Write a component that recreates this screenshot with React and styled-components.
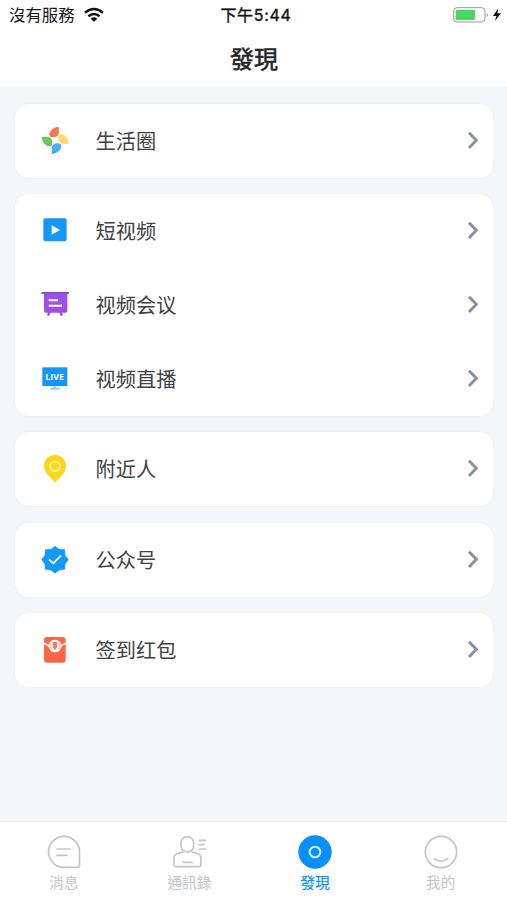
import React from 'react';
import styled, { createGlobalStyle } from 'styled-components';

const GlobalStyle = createGlobalStyle`
  * {
    box-sizing: border-box;
  }

  body {
    margin: 0;
    background-color: #f4f6fa;
    font-family: 'Liberation Sans', 'Noto Sans CJK SC', sans-serif;
  }
`;

const Screen = styled.div`
  display: flex;
  flex-direction: column;
  width: 507px;
  height: 900px;
  overflow: hidden;
  background-color: #f4f6fa;
`;

const Header = styled.header`
  flex: none;
  height: 86px;
  background-color: #fff;
`;

const StatusBar = styled.div`
  display: grid;
  grid-template-columns: 1fr auto 1fr;
  align-items: center;
  height: 29px;
  padding: 0 6px 0 9px;
  color: #161616;
  font-family: Inter, 'Noto Sans CJK TC', sans-serif;
  font-size: 16.4px;
  line-height: 29px;
`;

const Carrier = styled.div`
  display: flex;
  align-items: center;
  gap: 9px;
  padding-top: 1px;
`;

const Clock = styled.div`
  padding-left: 2px;
  font-size: 16px;
  font-weight: 400;
  letter-spacing: 0.7px;
  -webkit-text-stroke: 0.4px currentColor;
`;

const Power = styled.div`
  display: flex;
  align-items: center;
  justify-content: flex-end;
  gap: 3px;
`;

const Title = styled.h1`
  margin: 0;
  padding-left: 1px;
  color: #262626;
  font-family: 'Noto Sans CJK TC', sans-serif;
  font-size: 24px;
  font-weight: 400;
  line-height: 57px;
  text-align: center;
  -webkit-text-stroke: 0.6px currentColor;
`;

const Main = styled.main`
  flex: 1;
  display: flex;
  flex-direction: column;
  gap: 16.6px;
  padding: 18px 14px 0 15px;
`;

const Card = styled.section`
  border-radius: 14px;
  background-color: #fff;
  box-shadow: 0 0 2px #e3e7ee;
`;

const Row = styled.div`
  display: flex;
  align-items: center;
  height: 73.8px;
  padding: 0 14px 0 25px;
`;

const Label = styled.span`
  flex: 1;
  margin-left: 25.6px;
  color: #404245;
  font-family: 'Noto Sans CJK SC', sans-serif;
  font-size: 20.2px;
  line-height: 30px;
`;

const Icon = styled.svg`
  display: block;
  flex: none;
  overflow: visible;
`;

const LiveText = styled.text`
  fill: #fff;
  font-family: 'Open Sans', sans-serif;
  font-size: 26px;
  font-weight: 700;
`;

const TabBar = styled.nav`
  flex: none;
  display: grid;
  grid-template-columns: repeat(4, 125.6px);
  height: 79px;
  padding: 12.5px 0 0 1px;
  border-top: 1px solid #eef0f4;
  background-color: #fff;
`;

const Tab = styled.div`
  display: flex;
  flex-direction: column;
  align-items: center;
  color: ${props => (props.$active ? '#0b8ffa' : '#c2c4ce')};
`;

const TabLabel = styled.span`
  margin-top: 2.5px;
  font-family: 'Noto Sans CJK TC', sans-serif;
  font-size: 14.8px;
  line-height: 22px;
  ${props => props.$active && '-webkit-text-stroke: 0.2px currentColor;'}
`;

const WifiIcon = () => (
  <Icon width="20" height="14" viewBox="0 0 60 42">
    <g fill="none" stroke="#111" strokeWidth="7.5">
      <path d="M3 11 Q30 -11 57 11" />
      <path d="M13 22 Q30 8 47 22" />
    </g>
    <path fill="#111" d="M20 29 Q30 21 40 29 L30 38 Z" />
  </Icon>
);

const BatteryIcon = () => (
  <Icon width="36" height="16" viewBox="0 0 108 48">
    <rect x="-1" y="2" width="94" height="43" rx="10" fill="none" stroke="#999" strokeWidth="3" />
    <rect x="5" y="8" width="58" height="31" rx="4" fill="#4cd763" />
    <path d="M98 17 Q105 24 98 31 Z" fill="#999" />
  </Icon>
);

const BoltIcon = () => (
  <Icon width="8" height="13" viewBox="0 0 24 39">
    <path fill="#111" d="M16 -2 L0 21 H10 L6 36 L24 13 H13 Z" />
  </Icon>
);

const ItemIcon = ({ children }) => (
  <Icon width="30" height="30" viewBox="0 0 90 90">
    {children}
  </Icon>
);

const petals = ['#f47750', '#fddb68', '#4daef2', '#68c958'];

const MomentsIcon = () => (
  <ItemIcon>
    {petals.map((color, index) => (
      <path
        key={color}
        fill={color}
        transform={`rotate(${index * 90} 46 43)`}
        d="M57 2 C42 3 28 13 28 26 C28 31 33 34 39 34 C49 34 57 28 57 18 C57 12 55 8 57 2 Z"
      />
    ))}
  </ItemIcon>
);

const ShortVideoIcon = () => (
  <ItemIcon>
    <rect x="10" y="7" width="70" height="69" rx="6" fill="#1597fb" />
    <path d="M35 28 L60 42 L35 56 Z" fill="#fff" />
  </ItemIcon>
);

const MeetingIcon = () => (
  <ItemIcon>
    <path d="M29 64 L24 77 M60 64 L66 77" stroke="#9b51e0" strokeWidth="7" />
    <path d="M5 6 H87 V12 H82 V62 Q82 68 76 68 H18 Q12 68 12 62 V12 H5 Z" fill="#9d50e3" />
    <path d="M5 6.5 H87 V10 H5 Z" fill="#8541cc" />
    <path d="M26 31 H54 M26 47 H66" stroke="#fff" strokeWidth="6" />
  </ItemIcon>
);

const LiveIcon = () => (
  <ItemIcon>
    <path d="M7 10 H82 V66 H7 Z" fill="#1697f8" />
    <path d="M44 66 V73 M31 74 H59" stroke="#7bc5fa" strokeWidth="5" />
    <LiveText x="16" y="47" textLength="56" lengthAdjust="spacingAndGlyphs">
      LIVE
    </LiveText>
  </ItemIcon>
);

const NearbyIcon = () => (
  <ItemIcon>
    <path
      d="M45 86 C39 77 12 59 12 36 C12 16 26 3 45 3 C64 3 78 16 78 36 C78 59 51 77 45 86 Z"
      fill="#fdd51c"
    />
    <circle cx="45" cy="37" r="14.5" fill="none" stroke="#fff7c4" strokeWidth="4.5" />
  </ItemIcon>
);

const OfficialIcon = () => (
  <ItemIcon>
    <path
      d="M45 4 L57 13 L74 14 L75 31 L85 44 L75 57 L74 73 L57 75 L45 85 L33 75 L16 73 L15 57 L5 44 L15 31 L16 14 L33 13 Z"
      fill="#1498fa"
      stroke="#1498fa"
      strokeWidth="2"
      strokeLinejoin="round"
    />
    <path d="M27 43 L40 55 L63 32" fill="none" stroke="#fff" strokeWidth="5.5" />
  </ItemIcon>
);

const RedPacketIcon = () => (
  <ItemIcon>
    <rect x="12" y="6" width="65" height="77" rx="9" fill="#f96746" />
    <path d="M12 25 C20 28 25 31 30 37 M77 25 C69 28 64 31 60 37" fill="none" stroke="#fff" strokeWidth="5" />
    <circle cx="45" cy="33" r="19" fill="#fff" />
    <path d="M34 23 Q27 33 34 43 M56 23 Q63 33 56 43" fill="none" stroke="#fbab98" strokeWidth="3" />
    <path d="M39 21 H51 V38 L45 45 L39 38 Z" fill="#f97858" />
  </ItemIcon>
);

const ChevronIcon = () => (
  <Icon width="12" height="20" viewBox="0 0 36 60">
    <path d="M6 5 L28 28 L6 51" fill="none" stroke="#8a90a6" strokeWidth="9" />
  </Icon>
);

const TabIcon = ({ children }) => (
  <Icon width="34" height="34" viewBox="0 0 102 102" fill="none" stroke="currentColor" strokeWidth="5">
    {children}
  </Icon>
);

const MessageIcon = () => (
  <TabIcon>
    <path d="M51 4 A46.5 46.5 0 1 0 51 97 H90 Q97.5 97 97.5 90 V50.5 A46.5 46.5 0 0 0 51 4 Z" />
    <path d="M28 42 H70 M28 61 H61" />
  </TabIcon>
);

const ContactsIcon = () => (
  <TabIcon>
    <rect x="27" y="5" width="38" height="46" rx="19" />
    <path d="M35 51 C17 53 6 59 6 68 V88 Q6 95 13 95 H80 Q87 95 87 88 V68 C87 59 75 53 58 51" />
    <path d="M32 82 H62 M80 16 H102 M80 29 H98 M80 42 H102" />
  </TabIcon>
);

const DiscoverIcon = () => (
  <TabIcon>
    <circle cx="51" cy="51" r="50" fill="#078ffc" stroke="none" />
    <circle cx="51" cy="51" r="16" stroke="#d8f1ff" strokeWidth="6" />
  </TabIcon>
);

const MineIcon = () => (
  <TabIcon>
    <circle cx="51" cy="51" r="47" />
    <path d="M29 70 Q51 87 73 70" />
  </TabIcon>
);

const groups = [
  [{ label: '生活圈', icon: MomentsIcon }],
  [
    { label: '短视频', icon: ShortVideoIcon },
    { label: '视频会议', icon: MeetingIcon },
    { label: '视频直播', icon: LiveIcon }
  ],
  [{ label: '附近人', icon: NearbyIcon }],
  [{ label: '公众号', icon: OfficialIcon }],
  [{ label: '签到红包', icon: RedPacketIcon }]
];

const tabs = [
  { label: '消息', icon: MessageIcon },
  { label: '通訊錄', icon: ContactsIcon },
  { label: '發現', icon: DiscoverIcon, active: true },
  { label: '我的', icon: MineIcon }
];

const App = () => {
  return (
    <Screen>
      <GlobalStyle />
      <Header>
        <StatusBar>
          <Carrier>
            沒有服務
            <WifiIcon />
          </Carrier>
          <Clock>下午5:44</Clock>
          <Power>
            <BatteryIcon />
            <BoltIcon />
          </Power>
        </StatusBar>
        <Title>發現</Title>
      </Header>
      <Main>
        {groups.map((items, index) => (
          <Card key={index}>
            {items.map(({ label, icon: RowIcon }) => (
              <Row key={label}>
                <RowIcon />
                <Label>{label}</Label>
                <ChevronIcon />
              </Row>
            ))}
          </Card>
        ))}
      </Main>
      <TabBar>
        {tabs.map(({ label, icon: NavIcon, active }) => (
          <Tab key={label} $active={active}>
            <NavIcon />
            <TabLabel $active={active}>{label}</TabLabel>
          </Tab>
        ))}
      </TabBar>
    </Screen>
  );
};

export default App;
